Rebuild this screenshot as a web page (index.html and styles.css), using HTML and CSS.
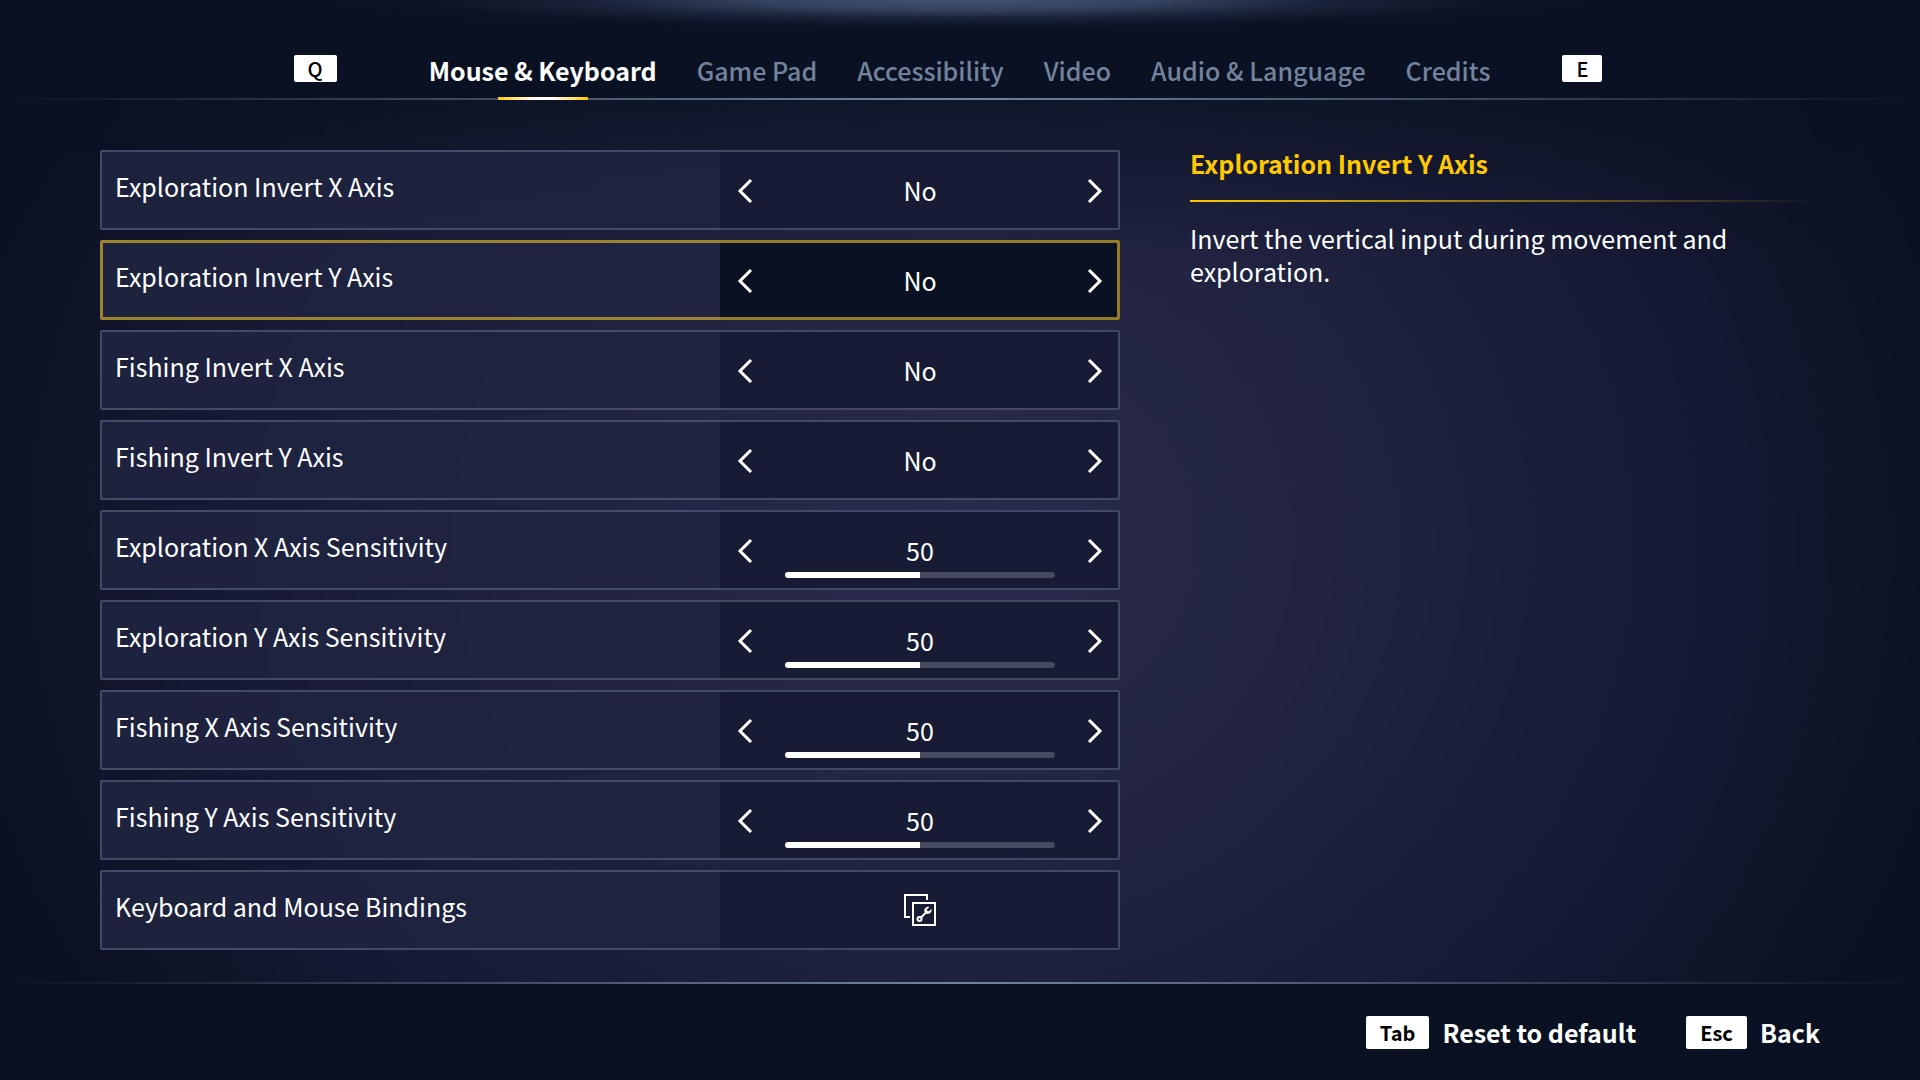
FILE: index.html
```html
<!DOCTYPE html>
<html lang="en">
<head>
<meta charset="utf-8">
<title>Settings</title>
<link rel="stylesheet" href="styles.css">
</head>
<body>
<svg class="sprite" aria-hidden="true">
  <symbol id="chevron-left" viewBox="0 0 16 26"><path d="M14 3 3 14l11 11"/></symbol>
  <symbol id="chevron-right" viewBox="0 0 16 26"><path d="M2 3l11 11-11 11"/></symbol>
</svg>
<header class="header">
  <button class="key key-small key-prev" type="button">Q</button>
  <nav class="tabs">
    <a class="tab tab-active" href="#mouse" aria-current="page">Mouse &amp; Keyboard</a>
    <a class="tab" href="#gamepad">Game Pad</a>
    <a class="tab" href="#accessibility">Accessibility</a>
    <a class="tab" href="#video">Video</a>
    <a class="tab" href="#audio">Audio &amp; Language</a>
    <a class="tab" href="#credits">Credits</a>
  </nav>
  <button class="key key-small key-next" type="button">E</button>
</header>
<main class="main">
  <section class="settings">
    <div class="row">
      <span class="label" id="l1">Exploration Invert X Axis</span>
      <div class="control" role="group" aria-labelledby="l1">
        <button class="arrow" type="button" aria-label="Previous"><svg><use href="#chevron-left"/></svg></button>
        <output class="value">No</output>
        <button class="arrow" type="button" aria-label="Next"><svg><use href="#chevron-right"/></svg></button>
      </div>
    </div>
    <div class="row row-active">
      <span class="label" id="l2">Exploration Invert Y Axis</span>
      <div class="control" role="group" aria-labelledby="l2">
        <button class="arrow" type="button" aria-label="Previous"><svg><use href="#chevron-left"/></svg></button>
        <output class="value">No</output>
        <button class="arrow" type="button" aria-label="Next"><svg><use href="#chevron-right"/></svg></button>
      </div>
    </div>
    <div class="row">
      <span class="label" id="l3">Fishing Invert X Axis</span>
      <div class="control" role="group" aria-labelledby="l3">
        <button class="arrow" type="button" aria-label="Previous"><svg><use href="#chevron-left"/></svg></button>
        <output class="value">No</output>
        <button class="arrow" type="button" aria-label="Next"><svg><use href="#chevron-right"/></svg></button>
      </div>
    </div>
    <div class="row">
      <span class="label" id="l4">Fishing Invert Y Axis</span>
      <div class="control" role="group" aria-labelledby="l4">
        <button class="arrow" type="button" aria-label="Previous"><svg><use href="#chevron-left"/></svg></button>
        <output class="value">No</output>
        <button class="arrow" type="button" aria-label="Next"><svg><use href="#chevron-right"/></svg></button>
      </div>
    </div>
    <div class="row">
      <label class="label" for="s1">Exploration X Axis Sensitivity</label>
      <div class="control">
        <button class="arrow" type="button" aria-label="Decrease"><svg><use href="#chevron-left"/></svg></button>
        <output class="value" for="s1">50</output>
        <button class="arrow" type="button" aria-label="Increase"><svg><use href="#chevron-right"/></svg></button>
        <input class="slider" id="s1" type="range" min="0" max="100" value="50">
      </div>
    </div>
    <div class="row">
      <label class="label" for="s2">Exploration Y Axis Sensitivity</label>
      <div class="control">
        <button class="arrow" type="button" aria-label="Decrease"><svg><use href="#chevron-left"/></svg></button>
        <output class="value" for="s2">50</output>
        <button class="arrow" type="button" aria-label="Increase"><svg><use href="#chevron-right"/></svg></button>
        <input class="slider" id="s2" type="range" min="0" max="100" value="50">
      </div>
    </div>
    <div class="row">
      <label class="label" for="s3">Fishing X Axis Sensitivity</label>
      <div class="control">
        <button class="arrow" type="button" aria-label="Decrease"><svg><use href="#chevron-left"/></svg></button>
        <output class="value" for="s3">50</output>
        <button class="arrow" type="button" aria-label="Increase"><svg><use href="#chevron-right"/></svg></button>
        <input class="slider" id="s3" type="range" min="0" max="100" value="50">
      </div>
    </div>
    <div class="row">
      <label class="label" for="s4">Fishing Y Axis Sensitivity</label>
      <div class="control">
        <button class="arrow" type="button" aria-label="Decrease"><svg><use href="#chevron-left"/></svg></button>
        <output class="value" for="s4">50</output>
        <button class="arrow" type="button" aria-label="Increase"><svg><use href="#chevron-right"/></svg></button>
        <input class="slider" id="s4" type="range" min="0" max="100" value="50">
      </div>
    </div>
    <div class="row">
      <span class="label" id="l9">Keyboard and Mouse Bindings</span>
      <button class="control control-open" type="button" aria-labelledby="l9">
        <svg class="bindings-icon" viewBox="0 0 32 32" aria-hidden="true">
          <path class="line" d="M6 23H1V1h22v5M9 9h22v22H9z"/>
          <path class="line" d="M17 23.500 22.500 18"/>
          <circle class="line" cx="15.500" cy="25" r="2"/>
          <path class="solid" d="M25.400 12.900 22.900 15.400 23.300 17 24.900 17.300 27.400 15C28.200 17.800 26 20.400 23 19.900L20.300 17.400C19.800 14.600 22.600 12.100 25.400 12.900z"/>
        </svg>
      </button>
    </div>
  </section>
  <aside class="details">
    <h2 class="details-title">Exploration Invert Y Axis</h2>
    <p class="details-text">Invert the vertical input during movement and exploration.</p>
  </aside>
</main>
<footer class="footer">
  <button class="action" type="button"><kbd class="key">Tab</kbd>Reset to default</button>
  <button class="action" type="button"><kbd class="key">Esc</kbd>Back</button>
</footer>
</body>
</html>
```
FILE: styles.css
```css
* { box-sizing: border-box; }

body {
  margin: 0;
  min-height: 100vh;
  display: flex;
  flex-direction: column;
  background:
    linear-gradient(rgba(10, 17, 34, 0.7) 100px, rgba(10, 17, 34, 0) 260px),
    radial-gradient(ellipse 53% 84% at 50% 50%, #2b2b4e 0%, #272848 16%, #1f223f 45%, #171a34 71%, #0b1122 100%) #0a1122;
  color: #fff;
  font: 400 25px/34px "Noto Sans CJK JP", "Noto Sans", sans-serif;
}

button {
  margin: 0;
  padding: 0;
  border: 0;
  background: none;
  color: inherit;
  font: inherit;
  cursor: pointer;
}

.sprite { display: none; }

/* Header */
.header {
  height: 100px;
  padding-right: 24px;
  display: flex;
  justify-content: center;
  align-items: flex-end;
  background:
    linear-gradient(90deg, transparent, #7186a3 50%, transparent) bottom / 100% 2px no-repeat,
    radial-gradient(ellipse 34% 32px at 50% 0, #43506f 0%, #35425f 30%, rgba(38, 49, 75, 0.6) 55%, rgba(20, 30, 48, 0.2) 82%, transparent 100%),
    #0a1122;
}

.tabs { display: flex; }

.tab {
  position: relative;
  height: 47px;
  padding: 0 20px;
  color: #73839d;
  font-weight: 500;
  text-decoration: none;
}

.tab-active {
  color: #fff;
  font-weight: 700;
}

.tab-active::after {
  content: "";
  position: absolute;
  left: 50%;
  bottom: 0;
  width: 90px;
  height: 3px;
  margin-left: -45px;
  background: linear-gradient(90deg, #ffc800, #fff 40%, #fff 60%, #ffc800);
}

.key {
  height: 33px;
  padding: 0 14px;
  border-radius: 2px;
  background: #fff;
  color: #000;
  font: 700 20px/33px "Noto Sans CJK JP", "Noto Sans", sans-serif;
}

.key-small {
  height: 27px;
  margin-bottom: 18px;
  font-weight: 500;
  line-height: 27px;
}

.key-prev { margin-right: 72px; }
.key-next { margin-left: 52px; }

/* Content */
.main {
  flex: 1;
  display: grid;
  grid-template-columns: 1020fr 630fr;
  gap: 70px;
  padding: 50px 100px 32px;
}

.settings {
  display: flex;
  flex-direction: column;
  gap: 10px;
}

.row {
  position: relative;
  height: 80px;
  display: flex;
  border-radius: 2px;
  background: rgba(32, 37, 65, 0.85);
}

/* The frame lies over both cells of the row. */
.row::after {
  content: "";
  position: absolute;
  inset: 0;
  border: 2px solid rgba(94, 111, 143, 0.55);
  border-radius: 2px;
  pointer-events: none;
}

.row-active::after { border: 3px solid rgba(255, 208, 40, 0.57); }

.label {
  flex: 1;
  padding: 19px 15px;
}

.control {
  width: 400px;
  display: grid;
  grid-template-columns: 50px 1fr 50px;
  grid-template-rows: 62px 6px;
  background: rgba(21, 25, 49, 0.76);
}

.row-active .control { background: #0a1122; }

.arrow {
  display: grid;
  place-items: center;
  height: 80px;
}

.arrow svg {
  width: 16px;
  height: 26px;
}

symbol path {
  fill: none;
  stroke: #fff;
  stroke-width: 3px;
}

.value {
  padding-top: 23px;
  text-align: center;
}

.slider {
  appearance: none;
  grid-column: 2;
  grid-row: 2;
  width: 270px;
  height: 6px;
  margin: 0;
  justify-self: center;
  border-radius: 3px;
  background: linear-gradient(90deg, #fff 50%, #474b5f 50%);
}

.slider::-webkit-slider-thumb {
  appearance: none;
  width: 6px;
  height: 6px;
}

.control-open {
  display: grid;
  grid-template: 80px / 1fr;
  place-items: center;
}

.bindings-icon {
  width: 32px;
  height: 32px;
}

.line { fill: none; stroke: #fff; stroke-width: 2px; }
.solid { fill: #fff; }

/* Description of the selected setting */
.details-title {
  margin: 0;
  padding-bottom: 26px;
  background: linear-gradient(90deg, #ffc800, transparent) bottom / 100% 2px no-repeat;
  color: #ffc800;
  font-size: 25px;
  line-height: 26px;
  font-weight: 700;
}

.details-text {
  margin: 20px 0 0;
  line-height: 33px;
}

/* Footer */
.footer {
  height: 98px;
  padding: 33px 100px 0;
  display: flex;
  justify-content: flex-end;
  align-items: flex-start;
  gap: 50px;
  background:
    linear-gradient(90deg, transparent, #7186a3 50%, transparent) top / 100% 2px no-repeat,
    #0a1122;
}

.action {
  display: flex;
  align-items: center;
  gap: 13px;
  font-weight: 700;
}
```
